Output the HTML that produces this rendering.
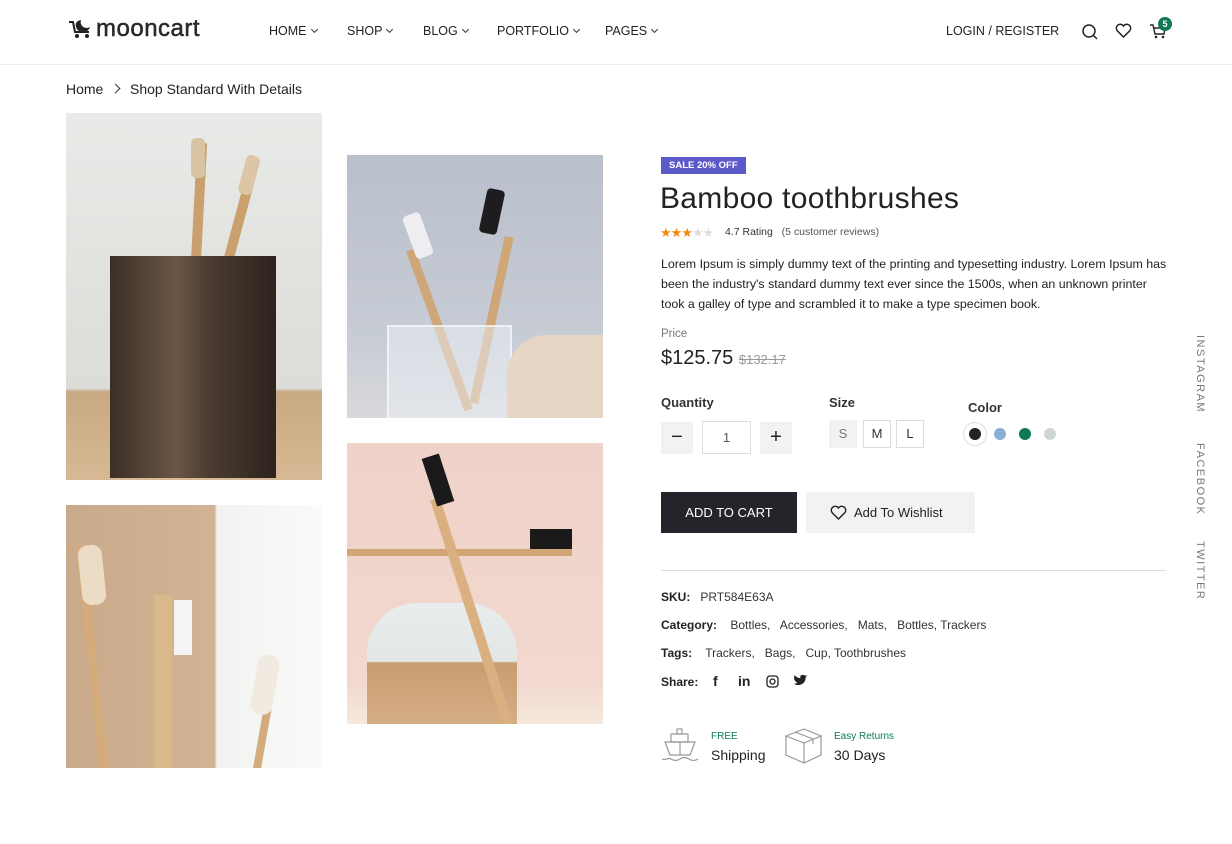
<!DOCTYPE html>
<html><head><meta charset="utf-8"><style>
*{margin:0;padding:0;box-sizing:border-box}
body{width:1232px;height:844px;background:#fff;font-family:"Liberation Sans",sans-serif;color:#222;position:relative;overflow:hidden}
.a{position:absolute}
.nav{font-size:12.5px;color:#222;top:24px}
.chev{display:inline-block;width:5px;height:5px;border-right:1px solid #333;border-bottom:1px solid #333;transform:rotate(45deg);margin-left:5px;position:relative;top:-3px}
.meta{font-size:12px;color:#333}
.meta b{font-weight:bold;color:#222;margin-right:10px}
.vt{writing-mode:vertical-rl;font-size:11px;letter-spacing:1.5px;color:#777}
.sz{width:28px;height:28px;border:1px solid #ddd;font-size:13px;text-align:center;line-height:26px;color:#333;position:absolute;top:420px}
.dot{width:12px;height:12px;border-radius:50%;position:absolute;top:428px}
</style></head><body>
<div class="a" style="left:68px;top:17px;width:26px;height:24px">
<svg width="26" height="24" viewBox="0 0 26 24"><path d="M1 5 L5 5 L7 15 L21 15" stroke="#222" stroke-width="2" fill="none"/><path d="M8 6 A7 7 0 0 0 22 10 A6 6 0 0 1 13 3 A7 7 0 0 0 8 6Z" fill="#222"/><circle cx="9" cy="19" r="2" fill="#222"/><circle cx="19" cy="19" r="2" fill="#222"/></svg></div>
<div class="a" style="left:96px;top:15px;font-size:24px;color:#2a2a2a;letter-spacing:0.5px;-webkit-text-stroke:0.5px #2a2a2a">mooncart</div>
<div class="a nav" style="left:269px">HOME<span class="chev"></span></div>
<div class="a nav" style="left:347px">SHOP<span class="chev"></span></div>
<div class="a nav" style="left:423px">BLOG<span class="chev"></span></div>
<div class="a nav" style="left:497px">PORTFOLIO<span class="chev"></span></div>
<div class="a nav" style="left:605px">PAGES<span class="chev"></span></div>
<div class="a nav" style="left:946px">LOGIN / REGISTER</div>
<svg class="a" style="left:1081px;top:23px" width="18" height="18" viewBox="0 0 18 18"><circle cx="8" cy="8" r="6" stroke="#222" stroke-width="1.5" fill="none"/><path d="M12.5 12.5L16 16" stroke="#222" stroke-width="1.5"/></svg>
<svg class="a" style="left:1115px;top:23px" width="17" height="16" viewBox="0 0 17 16"><path d="M8.5 14 L2 7.5 A3.6 3.6 0 0 1 8.5 3 A3.6 3.6 0 0 1 15 7.5Z" stroke="#222" stroke-width="1.5" fill="none"/></svg>
<svg class="a" style="left:1149px;top:23px" width="18" height="17" viewBox="0 0 18 17"><path d="M1 2H4L6 11H15L16 5H5" stroke="#222" stroke-width="1.4" fill="none"/><circle cx="7" cy="14" r="1.3" fill="#222"/><circle cx="14" cy="14" r="1.3" fill="#222"/></svg>
<div class="a" style="left:1158px;top:17px;width:14px;height:14px;border-radius:50%;background:#0f7a55;color:#fff;font-size:9px;font-weight:bold;text-align:center;line-height:14px">5</div>
<div class="a" style="left:0;top:64px;width:1232px;height:1px;background:#ececec"></div>
<div class="a" style="left:66px;top:81px;font-size:14px;color:#222">Home</div>
<div class="a" style="left:112px;top:85px;width:7px;height:7px;border-right:1.5px solid #333;border-top:1.5px solid #333;transform:rotate(45deg)"></div>
<div class="a" style="left:130px;top:81px;font-size:14px;color:#222">Shop Standard With Details</div>
<div class="a" style="left:66px;top:113px;width:256px;height:367px;background:linear-gradient(#e9ebe8 0%,#dcdcd8 75%,#c9a983 76%,#d6b994 100%);overflow:hidden">
 <div class="a" style="left:128px;top:30px;width:10px;height:120px;background:#c9a06e;transform:rotate(3deg)"></div>
 <div class="a" style="left:125px;top:25px;width:14px;height:40px;background:#d8c3a3;border-radius:5px"></div>
 <div class="a" style="left:170px;top:45px;width:10px;height:110px;background:#c9a06e;transform:rotate(15deg)"></div>
 <div class="a" style="left:176px;top:42px;width:14px;height:40px;background:#dcc6a6;border-radius:5px;transform:rotate(15deg)"></div>
 <div class="a" style="left:44px;top:143px;width:166px;height:222px;background:linear-gradient(90deg,#3b2e25,#6a5647 40%,#4a3b30 60%,#2d241e);"></div>
</div>
<div class="a" style="left:347px;top:155px;width:256px;height:263px;background:linear-gradient(#b9bfcb,#c7ccd5 70%,#d9d9dc);overflow:hidden">
 <div class="a" style="left:88px;top:90px;width:9px;height:170px;background:#cfa678;transform:rotate(-20deg)"></div>
 <div class="a" style="left:62px;top:58px;width:18px;height:45px;background:#eeeef0;border-radius:4px;transform:rotate(-20deg)"></div>
 <div class="a" style="left:140px;top:80px;width:9px;height:170px;background:#cfa678;transform:rotate(12deg)"></div>
 <div class="a" style="left:136px;top:34px;width:18px;height:45px;background:#1d1d1f;border-radius:4px;transform:rotate(12deg)"></div>
 <div class="a" style="left:40px;top:170px;width:125px;height:100px;background:rgba(235,240,245,.5);border:2px solid rgba(255,255,255,.6)"></div>
 <div class="a" style="left:160px;top:180px;width:100px;height:90px;background:#e7d6c3;border-radius:40px 0 0 0"></div>
</div>
<div class="a" style="left:66px;top:505px;width:256px;height:263px;background:linear-gradient(90deg,#c9a98a 0%,#d2b495 58%,#f2f2f0 59%,#fafafa);overflow:hidden">
 <div class="a" style="left:22px;top:40px;width:8px;height:225px;background:#d4ac7c;transform:rotate(-6deg)"></div>
 <div class="a" style="left:14px;top:40px;width:24px;height:60px;background:#ecdcc6;border-radius:10px;transform:rotate(-6deg)"></div>
 <div class="a" style="left:88px;top:90px;width:18px;height:180px;background:#d9b88c"></div>
 <div class="a" style="left:108px;top:95px;width:18px;height:55px;background:#f4f4f4"></div>
 <div class="a" style="left:192px;top:200px;width:8px;height:70px;background:#d4ac7c;transform:rotate(10deg)"></div>
 <div class="a" style="left:188px;top:150px;width:22px;height:60px;background:#f1eae0;border-radius:10px;transform:rotate(10deg)"></div>
</div>
<div class="a" style="left:347px;top:443px;width:256px;height:281px;background:linear-gradient(#efd2c8,#f2d8cf 85%,#f6e9dc);overflow:hidden">
 <div class="a" style="left:20px;top:160px;width:150px;height:130px;border-radius:50px 50px 0 0;background:linear-gradient(#e9ecec 0%,#e3e7e6 45%,#c99d70 46%,#d7b088 100%)"></div>
 <div class="a" style="left:0;top:106px;width:225px;height:7px;background:#d1a574"></div>
 <div class="a" style="left:183px;top:86px;width:42px;height:20px;background:#1a1a1a"></div>
 <div class="a" style="left:120px;top:50px;width:10px;height:240px;background:#dbb081;transform:rotate(-18deg)"></div>
 <div class="a" style="left:82px;top:12px;width:18px;height:50px;background:#1a1a1a;transform:rotate(-18deg)"></div>
</div>
<div class="a" style="left:661px;top:157px;background:#5c5ac8;color:#fff;font-size:9.5px;font-weight:bold;padding:3px 8px">SALE 20% OFF</div>
<div class="a" style="left:660px;top:182px;font-size:30px;color:#222;letter-spacing:0.3px">Bamboo toothbrushes</div>
<div class="a" style="left:660px;top:225px;font-size:13px;letter-spacing:-1px"><span style="color:#f08a10">★★★</span><span style="color:#ddd">★★</span></div>
<div class="a" style="left:725px;top:226px;font-size:10.5px;color:#333">4.7 Rating &nbsp;&nbsp;<span style="color:#555">(5 customer reviews)</span></div>
<div class="a" style="left:661px;top:254px;width:510px;font-size:12.4px;line-height:20px;color:#222">Lorem Ipsum is simply dummy text of the printing and typesetting industry. Lorem Ipsum has been the industry's standard dummy text ever since the 1500s, when an unknown printer took a galley of type and scrambled it to make a type specimen book.</div>
<div class="a" style="left:661px;top:328px;font-size:11.5px;color:#777">Price</div>
<div class="a" style="left:661px;top:347px;font-size:20px;color:#222">$125.75 <span style="font-size:13px;color:#999;text-decoration:line-through">$132.17</span></div>
<div class="a" style="left:661px;top:395px;font-size:13px;font-weight:bold;color:#333">Quantity</div>
<div class="a" style="left:661px;top:422px;width:32px;height:32px;background:#f2f2f2;text-align:center;line-height:30px;font-size:20px">−</div>
<div class="a" style="left:702px;top:421px;width:49px;height:33px;border:1px solid #ddd;text-align:center;line-height:31px;font-size:13px;color:#555">1</div>
<div class="a" style="left:760px;top:422px;width:32px;height:32px;background:#f2f2f2;text-align:center;line-height:30px;font-size:20px">+</div>
<div class="a" style="left:829px;top:395px;font-size:13px;font-weight:bold;color:#333">Size</div>
<div class="sz" style="left:829px;background:#f2f2f2;border-color:#f2f2f2;color:#777">S</div>
<div class="sz" style="left:863px">M</div>
<div class="sz" style="left:896px">L</div>
<div class="a" style="left:968px;top:400px;font-size:13px;font-weight:bold;color:#333">Color</div>
<div class="a" style="left:963px;top:422px;width:24px;height:24px;border-radius:50%;border:1px solid #ddd"></div>
<div class="dot" style="left:969px;background:#222228"></div>
<div class="dot" style="left:994px;background:#8ab0d6"></div>
<div class="dot" style="left:1019px;background:#0e7a55"></div>
<div class="dot" style="left:1044px;background:#cdd6d2"></div>
<div class="a" style="left:661px;top:492px;width:136px;height:41px;background:#23252a;color:#fff;font-size:13px;text-align:center;line-height:41px">ADD TO CART</div>
<div class="a" style="left:806px;top:492px;width:169px;height:41px;background:#f2f2f2;font-size:13px;line-height:41px;padding-left:48px;color:#222">Add To Wishlist</div>
<svg class="a" style="left:830px;top:505px" width="17" height="16" viewBox="0 0 17 16"><path d="M8.5 14 L2 7.5 A3.6 3.6 0 0 1 8.5 3 A3.6 3.6 0 0 1 15 7.5Z" stroke="#222" stroke-width="1.4" fill="none"/></svg>
<div class="a" style="left:661px;top:570px;width:505px;height:1px;background:#ddd"></div>
<div class="a meta" style="left:661px;top:590px"><b>SKU:</b>PRT584E63A</div>
<div class="a meta" style="left:661px;top:618px"><b>Category:</b> Bottles, &nbsp; Accessories, &nbsp; Mats, &nbsp; Bottles, Trackers</div>
<div class="a meta" style="left:661px;top:646px"><b>Tags:</b> Trackers, &nbsp; Bags, &nbsp; Cup, Toothbrushes</div>
<div class="a meta" style="left:661px;top:675px"><b>Share:</b></div>
<div class="a" style="left:713px;top:673px;font-size:14px;font-weight:bold">f</div>
<div class="a" style="left:738px;top:673px;font-size:14px;font-weight:bold">in</div>
<svg class="a" style="left:766px;top:675px" width="13" height="13" viewBox="0 0 13 13"><rect x="1" y="1" width="11" height="11" rx="3" stroke="#222" stroke-width="1.3" fill="none"/><circle cx="6.5" cy="6.5" r="2.5" stroke="#222" stroke-width="1.3" fill="none"/></svg>
<svg class="a" style="left:794px;top:675px" width="14" height="12" viewBox="0 0 24 20"><path d="M23 2a9 9 0 0 1-3 1 4 4 0 0 0 2-3 9 9 0 0 1-3 1A4.5 4.5 0 0 0 11 5 13 13 0 0 1 1 0s-4 9 5 13a13 13 0 0 1-6 2c9 5 20 0 20-11z" fill="#222"/></svg>
<svg class="a" style="left:661px;top:727px" width="38" height="38" viewBox="0 0 38 38" fill="none" stroke="#999" stroke-width="1.2"><rect x="16" y="2" width="5" height="5"/><path d="M10 7h17v8H10z"/><path d="M4 15h30l-5 13H9z"/><path d="M19 15v13"/><path d="M1 32c4 2 6-2 9 0s6 2 9 0 6-2 9 0 6 2 9 0"/></svg>
<div class="a" style="left:711px;top:731px;font-size:10px;color:#0e7a55">FREE</div>
<div class="a" style="left:711px;top:747px;font-size:14px;color:#222">Shipping</div>
<svg class="a" style="left:784px;top:726px" width="39" height="39" viewBox="0 0 39 39" fill="none" stroke="#999" stroke-width="1.2"><path d="M2 10L20 3 37 10 20 17z"/><path d="M2 10v19l18 8 17-8V10"/><path d="M20 17v20"/><path d="M11 6l18 7v5"/></svg>
<div class="a" style="left:834px;top:731px;font-size:10px;color:#0e7a55">Easy Returns</div>
<div class="a" style="left:834px;top:747px;font-size:14px;color:#222">30 Days</div>
<div class="a vt" style="left:1194px;top:335px">INSTAGRAM</div>
<div class="a vt" style="left:1194px;top:443px">FACEBOOK</div>
<div class="a vt" style="left:1194px;top:541px">TWITTER</div>
</body></html>
